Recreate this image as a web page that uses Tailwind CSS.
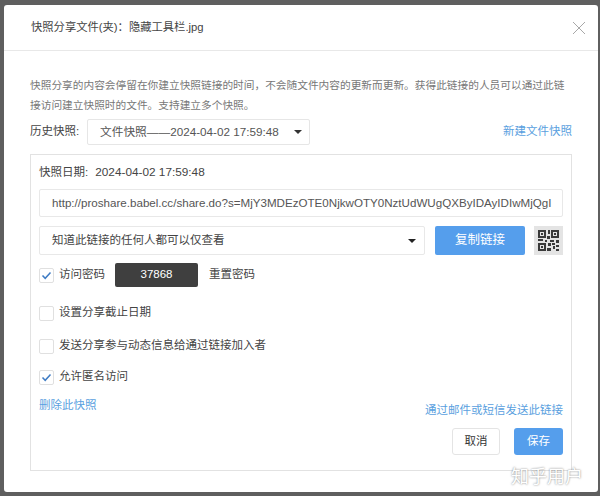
<!DOCTYPE html>
<html lang="zh-CN">
<head>
  <meta charset="UTF-8" />
  <title>快照分享</title>
  <script src="https://cdn.jsdelivr.net/npm/@tailwindcss/browser@4"></script>
</head>
<body class="relative w-[600px] h-[496px] overflow-hidden bg-[#5f5f5f] pt-[5px] pl-[4px] text-[#333] font-['Liberation_Sans','Noto_Sans_CJK_SC',sans-serif]">

  <div class="w-[594px] h-[487px] bg-white rounded-[3px] flex flex-col">
    <!-- header -->
    <div class="h-[46px] shrink-0 border-b border-[#e8e8e8] pl-[27px] pr-[12px] flex items-center justify-between">
      <span class="text-[11.3px] text-[#444]">快照分享文件(夹)：隐藏工具栏.jpg</span>
      <svg width="14" height="14" viewBox="0 0 14 14" class="stroke-[#a8a8a8]"><path d="M1 1L13 13M13 1L1 13" fill="none" stroke-width="1"/></svg>
    </div>

    <div class="pl-[26px] pr-[26px] pt-[24px]">
      <p class="text-[10.7px] leading-[20px] text-[#777]">快照分享的内容会停留在你建立快照链接的时间，不会随文件内容的更新而更新。获得此链接的人员可以通过此链接访问建立快照时的文件。支持建立多个快照。</p>

      <div class="mt-[4px] h-[26px] flex items-center">
        <span class="w-[57px] text-[11.5px] text-[#444]">历史快照:</span>
        <div class="w-[223px] h-[26px] border border-[#e6e6e6] rounded-[2px] pl-[12px] pr-[7px] flex items-center justify-between text-[11.7px] text-[#555]">
          <span>文件快照——2024-04-02 17:59:48</span>
          <span class="w-0 h-0 border-x-[4px] border-x-transparent border-t-[4px] border-t-[#333]"></span>
        </div>
        <a class="ml-auto text-[11.5px] text-[#5a9fe0]">新建文件快照</a>
      </div>

      <!-- snapshot panel -->
      <div class="mt-[9px] h-[317px] border border-[#e2e2e2] pl-[8px] pr-[8px] pt-[10px]">
        <div class="h-[16px] flex items-center text-[11.5px] text-[#444]">
          <span>快照日期:</span>
          <span class="ml-[7px] text-[11.8px]">2024-04-02 17:59:48</span>
        </div>

        <div class="mt-[8px] h-[28px] border border-[#e8e8e8] rounded-[2px] pl-[12px] pr-[2px] flex items-center overflow-hidden text-[11.6px] whitespace-nowrap text-[#555]">http://proshare.babel.cc/share.do?s=MjY3MDEzOTE0NjkwOTY0NztUdWUgQXByIDAyIDIwMjQgI</div>

        <div class="mt-[9px] flex h-[29px]">
          <div class="w-[386px] border border-[#e8e8e8] rounded-[2px] pl-[12px] pr-[8px] flex items-center justify-between text-[11.5px] text-[#444]">
            <span>知道此链接的任何人都可以仅查看</span>
            <span class="w-0 h-0 border-x-[4px] border-x-transparent border-t-[4px] border-t-[#222]"></span>
          </div>
          <button class="ml-[10px] w-[90px] bg-[#559eec] rounded-[2px] text-white text-[12.5px]">复制链接</button>
          <div class="ml-[9px] w-[29px] bg-[#e4e4e4] flex items-center justify-center">
            <svg width="21" height="21" viewBox="0 0 21 21" fill="#3a3a3a">
              <path fill-rule="evenodd" d="M0 0h8v8H0zM2 2v4h4V2zM13 0h8v8h-8zM15 2v4h4V2zM0 13h8v8H0zM2 15v4h4v-4z"/>
              <path d="M3 3h2v2H3zM16 3h2v2h-2zM3 16h2v2H3zM10 0h2v4h-2zM9 6h3v3H9zM0 9h5v2H0zM7 10h2v2H7zM12 10h4v2h-4zM18 10h3v3h-3zM10 13h3v3h-3zM14 13h3v2h-3zM9 18h4v3H9zM15 16h2v3h-2zM18 15h3v2h-3zM18 19h3v2h-3z"/>
            </svg>
          </div>
        </div>

        <!-- options -->
        <div class="mt-[8px] h-[24px] flex items-center text-[11.5px] text-[#444]">
          <span class="w-[15px] h-[15px] border border-[#e0e0e0] rounded-[2px] flex items-center justify-center">
            <svg width="11" height="11" viewBox="0 0 11 11"><path d="M1.5 5.5L4.2 8.3L9.5 2.5" fill="none" stroke="#3f7cc4" stroke-width="1.5"/></svg>
          </span>
          <span class="ml-[5px]">访问密码</span>
          <span class="ml-[10px] w-[83px] h-[24px] bg-[#3f3f3f] rounded-[2px] text-white text-[11.5px] flex items-center justify-center">37868</span>
          <span class="ml-[11px]">重置密码</span>
        </div>

        <div class="mt-[18px] h-[16px] flex items-center text-[11.5px] text-[#444]">
          <span class="w-[15px] h-[15px] border border-[#e0e0e0] rounded-[2px]"></span>
          <span class="ml-[5px]">设置分享截止日期</span>
        </div>

        <div class="mt-[17px] h-[16px] flex items-center text-[11.5px] text-[#444]">
          <span class="w-[15px] h-[15px] border border-[#e0e0e0] rounded-[2px]"></span>
          <span class="ml-[5px]">发送分享参与动态信息给通过链接加入者</span>
        </div>

        <div class="mt-[15px] h-[16px] flex items-center text-[11.5px] text-[#444]">
          <span class="w-[15px] h-[15px] border border-[#e0e0e0] rounded-[2px] flex items-center justify-center">
            <svg width="11" height="11" viewBox="0 0 11 11"><path d="M1.5 5.5L4.2 8.3L9.5 2.5" fill="none" stroke="#3f7cc4" stroke-width="1.5"/></svg>
          </span>
          <span class="ml-[5px]">允许匿名访问</span>
        </div>

        <div class="mt-[12px] flex justify-between items-start text-[11.5px] text-[#5a9fe0]">
          <a>删除此快照</a>
          <a class="mt-[5px]">通过邮件或短信发送此链接</a>
        </div>

        <div class="mt-[9px] flex justify-end gap-[14px]">
          <button class="w-[48px] h-[27px] border border-[#e4e4e4] rounded-[3px] bg-white text-[11.5px] text-[#333]">取消</button>
          <button class="w-[49px] h-[27px] rounded-[3px] bg-[#559eec] text-white text-[11.5px]">保存</button>
        </div>
      </div>
    </div>
  </div>

  <!-- watermark -->
  <span class="absolute left-[511px] top-[465px] text-[18px] leading-[24px] text-white [text-shadow:0_0_2px_rgba(0,0,0,0.55)]">知乎用户</span>
</body>
</html>
